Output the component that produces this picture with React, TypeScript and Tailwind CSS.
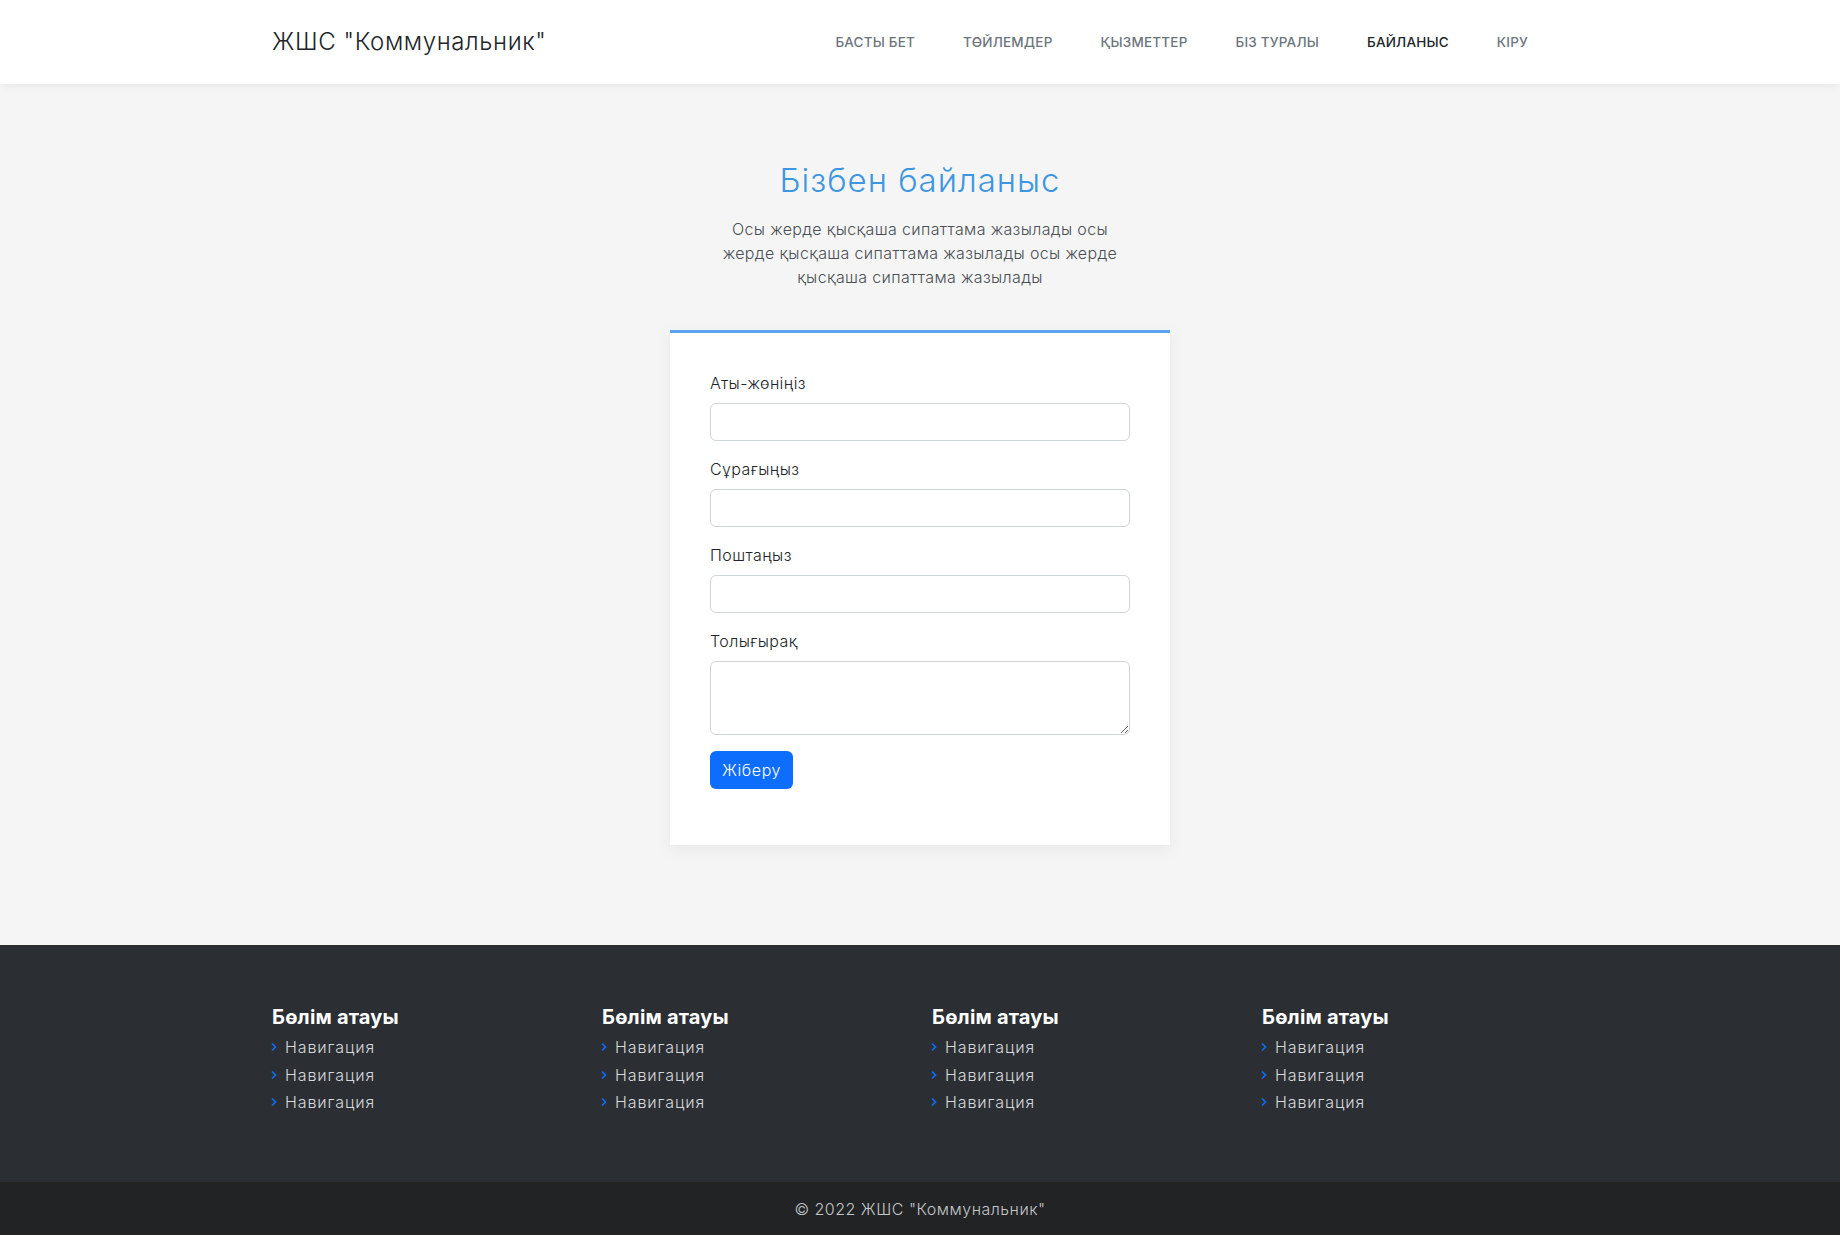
const nav = ["БАСТЫ БЕТ", "ТӨЙЛЕМДЕР", "ҚЫЗМЕТТЕР", "БІЗ ТУРАЛЫ", "БАЙЛАНЫС", "КІРУ"];

function Field({ label, area }: { label: string; area?: boolean }) {
  return (
    <div className="mb-4">
      <label className="block mb-2 text-[16px] leading-6 font-light tracking-[0.4px] text-[#212529]">{label}</label>
      {area ? (
        <textarea rows={2} className="block w-full h-[74px] rounded-md border border-[#ced4da] bg-white px-3 py-1.5 outline-none" />
      ) : (
        <input type="text" className="block w-full h-[38px] rounded-md border border-[#ced4da] bg-white px-3 outline-none" />
      )}
    </div>
  );
}

function FooterCol() {
  return (
    <div className="px-3">
      <h5 className="text-[20px] leading-6 font-bold tracking-[0.2px] text-white mb-[5px]">Бөлім атауы</h5>
      <ul className="flex flex-col">
        {[0, 1, 2].map((i) => (
          <li key={i} className="flex items-center h-[27.5px] text-[16px] font-light tracking-[0.9px] text-[#d6d8da]">
            <svg width="8" height="10" viewBox="0 0 8 10" className="mr-[7px] -ml-[2px]">
              <path d="M2 1.5 L5.5 5 L2 8.5" fill="none" stroke="#0d6efd" strokeWidth="1.6" />
            </svg>
            Навигация
          </li>
        ))}
      </ul>
    </div>
  );
}

export default function App() {
  return (
    <div className="min-h-[1235px] flex flex-col bg-[#f5f5f5] font-['Inter','Noto_Sans',sans-serif] text-[#212529]">
      <header className="bg-white shadow-[0_2px_10px_rgba(0,0,0,0.06)] relative z-10">
        <div className="w-[1320px] mx-auto px-3 h-[84px] flex items-center">
          <span className="text-[24px] font-light tracking-[0.6px] text-[#212529]">ЖШС "Коммунальник"</span>
          <nav className="ml-auto mr-[40px] flex gap-[48px] pt-[1px]">
            {nav.map((n) => (
              <a key={n} className={`text-[13.5px] font-medium tracking-[0.2px] ${n === "БАЙЛАНЫС" ? "text-[#212529]" : "text-[#6c757d]"}`}>
                {n}
              </a>
            ))}
          </nav>
        </div>
      </header>

      <main className="flex-1 pt-[76px] pb-[98px] flex flex-col items-center">
        <h1 className="text-[33px] leading-[40px] font-light text-[#3d97e0] tracking-[1px]">Бізбен байланыс</h1>
        <p className="mt-[17px] text-center text-[16px] leading-6 font-light tracking-[0.35px] text-[#4a4f54]">
          Осы жерде қысқаша сипаттама жазылады осы
          <br />
          жерде қысқаша сипаттама жазылады осы жерде
          <br />
          қысқаша сипаттама жазылады
        </p>
        <div className="mt-[41px] w-[500px] bg-white border-t-[3px] border-[#5aa2f0] shadow-[0_4px_16px_rgba(0,0,0,0.06)] px-10 pt-[38px] pb-[40px]">
          <Field label="Аты-жөніңіз" />
          <Field label="Сұрағыңыз" />
          <Field label="Поштаңыз" />
          <Field label="Толығырақ" area />
          <button className="mb-4 h-[38px] px-3 rounded-md bg-[#0d6efd] text-white text-[16px] font-light tracking-[0.6px]">Жіберу</button>
        </div>
      </main>

      <footer>
        <div className="bg-[#2b2f33] pt-[60px] pb-[66px]">
          <div className="w-[1320px] mx-auto grid grid-cols-4">
            <FooterCol />
            <FooterCol />
            <FooterCol />
            <FooterCol />
          </div>
        </div>
        <div className="bg-[#212325] h-[53px] flex items-center justify-center text-[16px] font-light tracking-[0.5px] text-[#c4c6c8]">
          © 2022 ЖШС "Коммунальник"
        </div>
      </footer>
    </div>
  );
}
